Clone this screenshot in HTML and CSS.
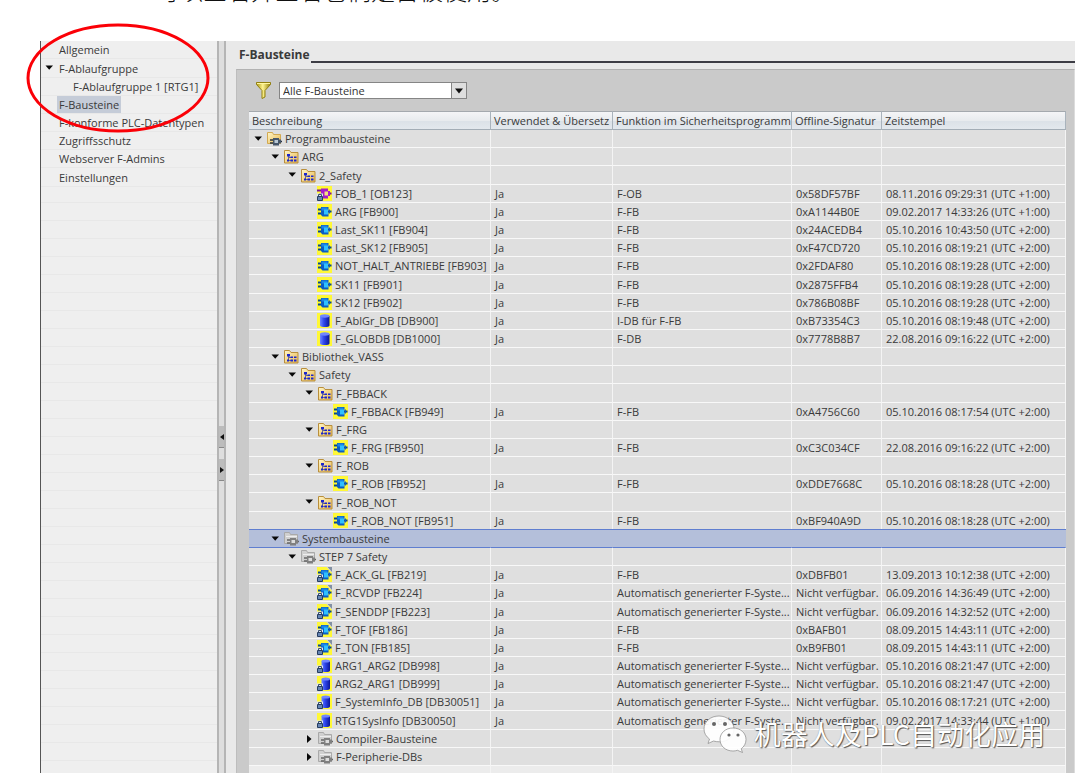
FILE: index.html
```html
<!DOCTYPE html>
<html lang="de">
<head>
<meta charset="utf-8">
<title>F-Bausteine</title>
<link rel="stylesheet" href="styles.css">
</head>
<body>
<svg class="sprite" aria-hidden="true">
  <defs>
    <linearGradient id="g-folder" x1="0" y1="0" x2="1" y2="1"><stop offset="0" stop-color="#fff6c8"/><stop offset="1" stop-color="#e8b850"/></linearGradient>
    <linearGradient id="g-db" x1="0" y1="0" x2="1" y2="0"><stop offset="0" stop-color="#7088ff"/><stop offset="0.4" stop-color="#3048ee"/><stop offset="1" stop-color="#0a1698"/></linearGradient>
    <linearGradient id="g-funnel" x1="0" y1="0" x2="1" y2="0"><stop offset="0" stop-color="#a89410"/><stop offset="0.45" stop-color="#fff490"/><stop offset="1" stop-color="#8f7c08"/></linearGradient>
  </defs>
  <symbol id="down" viewBox="0 0 12 12"><path d="M2.500 3.500h7.500L6.200 7.800z" fill="#080808"/></symbol>
  <symbol id="right" viewBox="0 0 12 12"><path d="M4 2v8l4.500-4z" fill="#080808"/></symbol>
  <symbol id="folder" viewBox="0 0 15 15"><path d="M.5 14V1.500h5l1.500 2h7V14z" fill="url(#g-folder)" stroke="#b98f3c"/><path d="M4.500 6v6M4.500 8.500h3M4.500 11.500h4" stroke="#6a6a90" fill="none"/><path d="M3 5h3v2.500H3zM6.500 7.500H9V9H6.500zM10 7.500h2.500V9H10zM6.500 10.500H9v2H6.500zM10 10.500h2.500v2H10zM3 10.500h2v2H3z" fill="#1b25cd"/></symbol>
  <symbol id="program" viewBox="0 0 15 15"><path d="M.5 12.500V1.500h5l1 2h7v9z" fill="url(#g-folder)" stroke="#d2a951"/><path d="M3 9h4M3 12h4M12 10.500h3" stroke="#29323d" stroke-width="1.500"/><path d="M6 7h6v1.500h2v4h-2v2H6z" fill="#46566a"/><path d="M7.500 9h3.500v3H7.500z" fill="#b9c8d5"/></symbol>
  <symbol id="system" viewBox="0 0 15 15"><path d="M.5 12.500V1.500h5l1 2h7v9z" fill="#d0d0d0" stroke="#a9a9a9"/><path d="M2 5.500h11" stroke="#eee"/><path d="M3 9h4M3 12h4M12 10.500h3" stroke="#666" stroke-width="1.500"/><path d="M6 7h6v1.500h2v4h-2v2H6z" fill="#808080"/><path d="M7.500 9h3.500v3H7.500z" fill="#ddd"/></symbol>
  <symbol id="fb" viewBox="0 0 15 15"><path d="M0 0h15v15H0z" fill="#fff836"/><path d="M1 5.500h4M1 9.500h4M11 7.500h3.500" stroke="#07468f" stroke-width="2"/><path d="M4 3h7.500v9.500H5.500L4 11z" fill="#0a5cc4"/><path d="M12 5.500h1v4h-1z" fill="#0a5cc4"/><path d="M4.500 3.500h6v3h-6z" fill="#1b86e6"/><path d="M7 5.500h4v5H7z" fill="#2fc0ff"/></symbol>
  <symbol id="ob" viewBox="0 0 15 15"><path d="M0 0h15v15H0z" fill="#fff836"/><path d="M0 4.500h5M2 8.500h4M11 7.500h3.500" stroke="#7a1590" stroke-width="2"/><path d="M4 2.500h7V5h2v5h-2v2.500H5.500V10H4z" fill="#a51bc9"/><path d="M7.500 5.500H11v4H7.500z" fill="#f6e27a"/></symbol>
  <symbol id="db" viewBox="0 0 15 15"><path d="M0 0h15v15H0z" fill="#fff836"/><path d="M3 3v9.500c0 2 9.500 2 9.500 0V3z" fill="url(#g-db)"/><ellipse cx="7.750" cy="3" rx="4.750" ry="1.700" fill="#7186ff"/></symbol>
  <symbol id="lock" viewBox="0 0 15 15"><path d="M0 7.500h6V15H0z" fill="#e2e6ee"/><path d="M1.500 11V8.500h3V11" fill="none" stroke="#38506f"/><path d="M.5 10.500h5v4h-5z" fill="#6685b3" stroke="#263d61"/></symbol>
  <symbol id="corner" viewBox="0 0 15 15"><path d="M9.500 0H15v6z" fill="#dfdfdf"/><path d="M10.500 0H15v5z" fill="#8290a3"/></symbol>
  <symbol id="fbl" viewBox="0 0 15 15"><use href="#fb"/><use href="#lock"/><use href="#corner"/></symbol>
  <symbol id="obl" viewBox="0 0 15 15"><use href="#ob"/><use href="#lock"/></symbol>
  <symbol id="dbl" viewBox="0 0 15 15"><path d="M0 0h15v15H0z" fill="#fff836"/><path d="M4.500 3v9.500c0 2 8.500 2 8.500 0V3z" fill="url(#g-db)"/><ellipse cx="8.750" cy="3" rx="4.250" ry="1.600" fill="#7186ff"/><use href="#lock"/></symbol>
</svg>

<p class="caption" lang="zh">可以查看并查看它们是否被使用。</p>

<div class="window">
  <nav class="nav">
    <ul>
      <li><a href="#">Allgemein</a></li>
      <li><button class="toggle" aria-label="F-Ablaufgruppe zuklappen"><svg><use href="#down"/></svg></button><a href="#">F-Ablaufgruppe</a></li>
      <li class="sub"><a href="#">F-Ablaufgruppe 1 [RTG1]</a></li>
      <li><a href="#" class="current" aria-current="page">F-Bausteine</a></li>
      <li><a href="#">F-konforme PLC-Datentypen</a></li>
      <li><a href="#">Zugriffsschutz</a></li>
      <li><a href="#">Webserver F-Admins</a></li>
      <li><a href="#">Einstellungen</a></li>
    </ul>
    <svg class="ring" viewBox="0 0 184 110"><ellipse cx="92" cy="55" rx="90" ry="53" fill="none" stroke="#fb0007" stroke-width="3"/></svg>
  </nav>
  <div class="splitter">
    <button aria-label="Navigation ausblenden"><svg viewBox="0 0 6 8"><path d="M5 1v6L1 4z"/></svg></button>
    <button aria-label="Navigation einblenden"><svg viewBox="0 0 6 8"><path d="M1 1v6l4-3z"/></svg></button>
  </div>
  <main class="main">
    <div class="title"><h1>F-Bausteine</h1></div>
    <section class="panel">
      <div class="filter">
        <svg class="funnel" viewBox="0 0 15 17"><path d="M.5.5h14v2L9 8.500V15l-3 1.500v-8L.5 2.500z" fill="url(#g-funnel)" stroke="#93800f"/><path d="M1 1.500h13" stroke="#fff7a0"/></svg>
        <span class="combo"><select aria-label="Filter"><option>Alle F-Bausteine</option></select><svg viewBox="0 0 14 14"><path d="M3 5h8l-4 5z"/></svg></span>
      </div>
      <table>
        <colgroup><col class="c1"><col class="c2"><col class="c3"><col class="c4"><col></colgroup>
        <thead><tr><th>Beschreibung</th><th>Verwendet &amp; Übersetz</th><th>Funktion im Sicherheitsprogramm</th><th>Offline-Signatur</th><th>Zeitstempel</th></tr></thead>
        <tbody>
          <tr><td><div class="node l0"><button class="toggle" aria-label="Zuklappen"><svg><use href="#down"/></svg></button><svg><use href="#program"/></svg>Programmbausteine</div></td><td></td><td></td><td></td><td></td></tr>
          <tr><td><div class="node l1"><button class="toggle" aria-label="Zuklappen"><svg><use href="#down"/></svg></button><svg><use href="#folder"/></svg>ARG</div></td><td></td><td></td><td></td><td></td></tr>
          <tr><td><div class="node l2"><button class="toggle" aria-label="Zuklappen"><svg><use href="#down"/></svg></button><svg><use href="#folder"/></svg>2_Safety</div></td><td></td><td></td><td></td><td></td></tr>
          <tr><td><div class="node l3 leaf"><svg><use href="#obl"/></svg>FOB_1 [OB123]</div></td><td>Ja</td><td>F-OB</td><td>0x58DF57BF</td><td>08.11.2016 09:29:31 (UTC +1:00)</td></tr>
          <tr><td><div class="node l3 leaf"><svg><use href="#fb"/></svg>ARG [FB900]</div></td><td>Ja</td><td>F-FB</td><td>0xA1144B0E</td><td>09.02.2017 14:33:26 (UTC +1:00)</td></tr>
          <tr><td><div class="node l3 leaf"><svg><use href="#fb"/></svg>Last_SK11 [FB904]</div></td><td>Ja</td><td>F-FB</td><td>0x24ACEDB4</td><td>05.10.2016 10:43:50 (UTC +2:00)</td></tr>
          <tr><td><div class="node l3 leaf"><svg><use href="#fb"/></svg>Last_SK12 [FB905]</div></td><td>Ja</td><td>F-FB</td><td>0xF47CD720</td><td>05.10.2016 08:19:21 (UTC +2:00)</td></tr>
          <tr><td><div class="node l3 leaf"><svg><use href="#fb"/></svg>NOT_HALT_ANTRIEBE [FB903]</div></td><td>Ja</td><td>F-FB</td><td>0x2FDAF80</td><td>05.10.2016 08:19:28 (UTC +2:00)</td></tr>
          <tr><td><div class="node l3 leaf"><svg><use href="#fb"/></svg>SK11 [FB901]</div></td><td>Ja</td><td>F-FB</td><td>0x2875FFB4</td><td>05.10.2016 08:19:28 (UTC +2:00)</td></tr>
          <tr><td><div class="node l3 leaf"><svg><use href="#fb"/></svg>SK12 [FB902]</div></td><td>Ja</td><td>F-FB</td><td>0x786B08BF</td><td>05.10.2016 08:19:28 (UTC +2:00)</td></tr>
          <tr><td><div class="node l3 leaf"><svg><use href="#db"/></svg>F_AblGr_DB [DB900]</div></td><td>Ja</td><td>I-DB für F-FB</td><td>0xB73354C3</td><td>05.10.2016 08:19:48 (UTC +2:00)</td></tr>
          <tr><td><div class="node l3 leaf"><svg><use href="#db"/></svg>F_GLOBDB [DB1000]</div></td><td>Ja</td><td>F-DB</td><td>0x7778B8B7</td><td>22.08.2016 09:16:22 (UTC +2:00)</td></tr>
          <tr><td><div class="node l1"><button class="toggle" aria-label="Zuklappen"><svg><use href="#down"/></svg></button><svg><use href="#folder"/></svg>Bibliothek_VASS</div></td><td></td><td></td><td></td><td></td></tr>
          <tr><td><div class="node l2"><button class="toggle" aria-label="Zuklappen"><svg><use href="#down"/></svg></button><svg><use href="#folder"/></svg>Safety</div></td><td></td><td></td><td></td><td></td></tr>
          <tr><td><div class="node l3"><button class="toggle" aria-label="Zuklappen"><svg><use href="#down"/></svg></button><svg><use href="#folder"/></svg>F_FBBACK</div></td><td></td><td></td><td></td><td></td></tr>
          <tr><td><div class="node l4 leaf"><svg><use href="#fb"/></svg>F_FBBACK [FB949]</div></td><td>Ja</td><td>F-FB</td><td>0xA4756C60</td><td>05.10.2016 08:17:54 (UTC +2:00)</td></tr>
          <tr><td><div class="node l3"><button class="toggle" aria-label="Zuklappen"><svg><use href="#down"/></svg></button><svg><use href="#folder"/></svg>F_FRG</div></td><td></td><td></td><td></td><td></td></tr>
          <tr><td><div class="node l4 leaf"><svg><use href="#fb"/></svg>F_FRG [FB950]</div></td><td>Ja</td><td>F-FB</td><td>0xC3C034CF</td><td>22.08.2016 09:16:22 (UTC +2:00)</td></tr>
          <tr><td><div class="node l3"><button class="toggle" aria-label="Zuklappen"><svg><use href="#down"/></svg></button><svg><use href="#folder"/></svg>F_ROB</div></td><td></td><td></td><td></td><td></td></tr>
          <tr><td><div class="node l4 leaf"><svg><use href="#fb"/></svg>F_ROB [FB952]</div></td><td>Ja</td><td>F-FB</td><td>0xDDE7668C</td><td>05.10.2016 08:18:28 (UTC +2:00)</td></tr>
          <tr><td><div class="node l3"><button class="toggle" aria-label="Zuklappen"><svg><use href="#down"/></svg></button><svg><use href="#folder"/></svg>F_ROB_NOT</div></td><td></td><td></td><td></td><td></td></tr>
          <tr><td><div class="node l4 leaf"><svg><use href="#fb"/></svg>F_ROB_NOT [FB951]</div></td><td>Ja</td><td>F-FB</td><td>0xBF940A9D</td><td>05.10.2016 08:18:28 (UTC +2:00)</td></tr>
          <tr class="selected"><td><div class="node l1"><button class="toggle" aria-label="Zuklappen"><svg><use href="#down"/></svg></button><svg><use href="#system"/></svg>Systembausteine</div></td><td></td><td></td><td></td><td></td></tr>
          <tr><td><div class="node l2"><button class="toggle" aria-label="Zuklappen"><svg><use href="#down"/></svg></button><svg><use href="#system"/></svg>STEP 7 Safety</div></td><td></td><td></td><td></td><td></td></tr>
          <tr><td><div class="node l3 leaf"><svg><use href="#fbl"/></svg>F_ACK_GL [FB219]</div></td><td>Ja</td><td>F-FB</td><td>0xDBFB01</td><td>13.09.2013 10:12:38 (UTC +2:00)</td></tr>
          <tr><td><div class="node l3 leaf"><svg><use href="#fbl"/></svg>F_RCVDP [FB224]</div></td><td>Ja</td><td>Automatisch generierter F-Syste...</td><td>Nicht verfügbar.</td><td>06.09.2016 14:36:49 (UTC +2:00)</td></tr>
          <tr><td><div class="node l3 leaf"><svg><use href="#fbl"/></svg>F_SENDDP [FB223]</div></td><td>Ja</td><td>Automatisch generierter F-Syste...</td><td>Nicht verfügbar.</td><td>06.09.2016 14:32:52 (UTC +2:00)</td></tr>
          <tr><td><div class="node l3 leaf"><svg><use href="#fbl"/></svg>F_TOF [FB186]</div></td><td>Ja</td><td>F-FB</td><td>0xBAFB01</td><td>08.09.2015 14:43:11 (UTC +2:00)</td></tr>
          <tr><td><div class="node l3 leaf"><svg><use href="#fbl"/></svg>F_TON [FB185]</div></td><td>Ja</td><td>F-FB</td><td>0xB9FB01</td><td>08.09.2015 14:43:11 (UTC +2:00)</td></tr>
          <tr><td><div class="node l3 leaf"><svg><use href="#dbl"/></svg>ARG1_ARG2 [DB998]</div></td><td>Ja</td><td>Automatisch generierter F-Syste...</td><td>Nicht verfügbar.</td><td>05.10.2016 08:21:47 (UTC +2:00)</td></tr>
          <tr><td><div class="node l3 leaf"><svg><use href="#dbl"/></svg>ARG2_ARG1 [DB999]</div></td><td>Ja</td><td>Automatisch generierter F-Syste...</td><td>Nicht verfügbar.</td><td>05.10.2016 08:21:47 (UTC +2:00)</td></tr>
          <tr><td><div class="node l3 leaf"><svg><use href="#dbl"/></svg>F_SystemInfo_DB [DB30051]</div></td><td>Ja</td><td>Automatisch generierter F-Syste...</td><td>Nicht verfügbar.</td><td>05.10.2016 08:17:21 (UTC +2:00)</td></tr>
          <tr><td><div class="node l3 leaf"><svg><use href="#dbl"/></svg>RTG1SysInfo [DB30050]</div></td><td>Ja</td><td>Automatisch generierter F-Syste...</td><td>Nicht verfügbar.</td><td>09.02.2017 14:33:44 (UTC +1:00)</td></tr>
          <tr><td><div class="node l3"><button class="toggle" aria-label="Aufklappen"><svg><use href="#right"/></svg></button><svg><use href="#system"/></svg>Compiler-Bausteine</div></td><td></td><td></td><td></td><td></td></tr>
          <tr><td><div class="node l3"><button class="toggle" aria-label="Aufklappen"><svg><use href="#right"/></svg></button><svg><use href="#system"/></svg>F-Peripherie-DBs</div></td><td></td><td></td><td></td><td></td></tr>
          <tr class="rest"><td></td><td></td><td></td><td></td><td></td></tr>
        </tbody>
      </table>
    </section>
  </main>
  <div class="watermark" lang="zh">
    <svg viewBox="0 0 44 38"><g fill="#fff" fill-opacity="0.92" stroke="#888" stroke-width="0.7"><path d="M16 1C7.500 1 1 6.500 1 14c0 4 2 7.500 5.500 10L5 28.500l5.500-2.500c2 .6 4 .8 6 .8C25 26.800 31 21 31 14S24.500 1 16 1z"/><path d="M30 13c-7.500 0-13 5-13 11.500S22.500 36 30 36c1.500 0 3-.2 4.500-.7l5 2.200-1.300-3.700c3-2.200 4.800-5.500 4.800-9.300C43 18 37.500 13 30 13z"/></g><g fill="#666"><circle cx="11" cy="9" r="2"/><circle cx="22" cy="9" r="2"/><circle cx="26" cy="20" r="1.600"/><circle cx="35" cy="20" r="1.600"/></g></svg>
    <span>机器人及PLC自动化应用</span>
  </div>
</div>
</body>
</html>
```
FILE: styles.css
```css
* { box-sizing: border-box; }

body {
  margin: 0;
  padding: 0 5px 9px 40px;
  background: #fff;
  color: #3a3a3a;
  font: 11px/17px "Open Sans", "Noto Sans", "Noto Sans CJK SC", sans-serif;
  overflow-x: hidden;
}

.sprite { position: absolute; width: 0; height: 0; }

.caption {
  margin: -23px 0 33px 115px;
  color: #111;
  font: 24px/31px "Liberation Serif", "Noto Sans CJK SC", serif;
  font-weight: 300;
  white-space: nowrap;
}

.window {
  position: relative;
  display: flex;
  background: #e9e9e9;
}

button {
  display: flex;
  align-items: center;
  justify-content: center;
  padding: 0;
  border: 0;
  background: none;
}

.toggle { flex: none; width: 12px; height: 12px; }
.toggle svg { width: 12px; height: 12px; }

/* Navigation */
.nav {
  position: relative;
  flex: none;
  width: 177px;
  border-left: 1px solid #555;
  background: repeating-linear-gradient(#efefef 0 17px, #e8e8e8 17px 18px);
}

.nav ul { margin: 0; padding: 0; list-style: none; }
.nav li {
  display: flex;
  align-items: center;
  height: 18px;
  padding-left: 16px;
  border-bottom: 1px solid #e8e8e8;
  background: #efefef;
}
.nav li:nth-child(6n+2) { height: 19px; }
.nav li .toggle { margin-left: -14px; margin-right: 2px; }
.nav li.sub { padding-left: 30px; }
.nav a {
  padding: 0 2px;
  color: inherit;
  line-height: 17px;
  text-decoration: none;
  white-space: nowrap;
}
.nav .current { background: #c5ccd8; }

.ring {
  position: absolute;
  left: -15px;
  top: -18px;
  width: 184px;
  height: 110px;
  pointer-events: none;
}

.splitter {
  flex: none;
  display: flex;
  flex-direction: column;
  gap: 11px;
  width: 9px;
  padding-top: 385px;
  border-left: 2px solid #b5b5b5;
  border-right: 2px solid #b5b5b5;
  background: #dedede;
}
.splitter button {
  width: 5px;
  height: 22px;
  border-bottom: 1px solid #888;
  background: #bcbcbc;
}
.splitter svg { flex: none; width: 6px; height: 8px; fill: #111; }

/* Main area */
.main { flex: 1; min-width: 0; padding-left: 10px; }

.title {
  display: flex;
  align-items: flex-end;
  gap: 1px;
  height: 22px;
  margin-bottom: 6px;
  padding-left: 3px;
}
.title::after {
  content: "";
  flex: 1;
  height: 2px;
  background: #3d3d45;
}
h1 { margin: 0; font-size: 12px; line-height: 16px; font-weight: 700; }

.panel {
  padding: 12px 8px 0 12px;
  border-top: 1px solid #b2b2b2;
  border-right: 1px solid #dcdcdc;
  border-left: 1px solid #bdbdbd;
  background: #cacaca;
}

.filter { display: flex; align-items: center; gap: 8px; height: 17px; margin: 0 0 12px 7px; }
.funnel { width: 15px; height: 17px; }
.combo { position: relative; display: flex; width: 188px; }
.combo select {
  appearance: none;
  width: 100%;
  height: 17px;
  padding: 0 20px 0 3px;
  border: 1px solid #858585;
  border-radius: 0;
  background: #fff;
  color: #333;
  font: inherit;
  line-height: 15px;
}
.combo svg {
  position: absolute;
  right: 1px;
  top: 1px;
  width: 15px;
  height: 15px;
  border-left: 1px solid #858585;
  background: #dedede;
  fill: #111;
  pointer-events: none;
}

table {
  width: 100%;
  border-collapse: separate;
  border-spacing: 0;
  table-layout: fixed;
}
.c1 { width: 242px; }
.c2 { width: 122px; }
.c3 { width: 179px; }
.c4 { width: 90px; }

th {
  height: 19px;
  padding: 0 0 0 3px;
  border-top: 1px solid #a4a9ae;
  border-right: 1px solid #a9b3bc;
  border-bottom: 1px solid #a3adb6;
  background: linear-gradient(#f4f5f7, #e8ebee 50%, #dbe1e7 50%, #e3e8ed);
  font-weight: 400;
  line-height: 17px;
  text-align: left;
  white-space: nowrap;
}

td {
  height: 18px;
  padding: 0 0 0 4px;
  border-right: 1px solid #f4f4f4;
  border-bottom: 1px solid #f8f8f8;
  background: #dfdfdf;
  line-height: 17px;
  white-space: nowrap;
}
tbody tr:nth-child(6n+3) td { height: 19px; }
td:first-child { padding: 0; }
.selected td {
  border-color: #5f7ed0;
  border-right-color: #b4bfda;
  background: #b4bfda;
  box-shadow: 0 -1px #5f7ed0;
}
tbody .rest td { height: 7px; border-bottom: 0; background: #ececec; }

.node { display: flex; align-items: center; gap: 3px; height: 17px; }
.node > svg { flex: none; width: 15px; height: 15px; }
.node.leaf > svg { margin-left: 14px; }
.l0 { padding-left: 3px; }
.l1 { padding-left: 20px; }
.l2 { padding-left: 37px; }
.l3 { padding-left: 54px; }
.l4 { padding-left: 70px; }

.watermark {
  position: absolute;
  right: 30px;
  bottom: 20px;
  display: flex;
  align-items: center;
  gap: 7px;
  color: #fff;
  font: 27px/38px "Noto Sans CJK SC", sans-serif;
  font-weight: 400;
  text-shadow: 1px 1px 1px #555, 0 0 1px #888;
  white-space: nowrap;
}
.watermark svg { width: 44px; height: 38px; }
```
